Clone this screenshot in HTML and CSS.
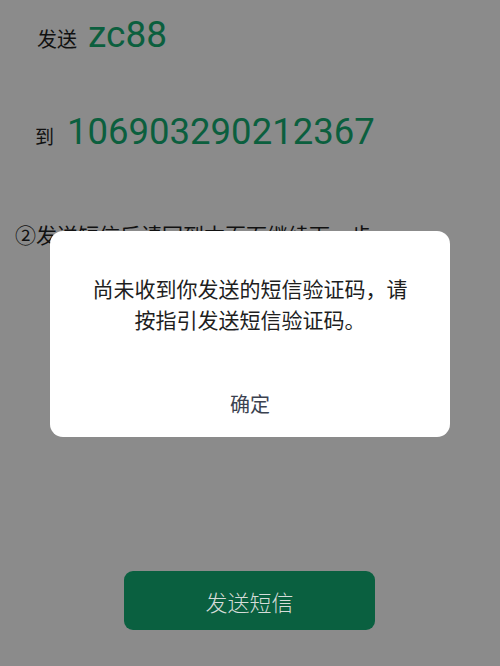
FILE: index.html
```html
<!DOCTYPE html>
<html lang="zh">
<head>
<meta charset="utf-8">
<link rel="stylesheet" href="styles.css">
</head>
<body>
<div class="page">
  <div class="row row-send">
    <span class="label">发送</span>
    <span class="code code-send">zc88</span>
  </div>
  <div class="row row-to">
    <span class="label label-to">到</span>
    <span class="code code-to">106903290212367</span>
  </div>
  <div class="step">②发送短信后请回到本页面继续下一步</div>
  <button class="send-btn">发送短信</button>
</div>
<div class="dialog">
  <p class="dialog-msg">尚未收到你发送的短信验证码，请<br>按指引发送短信验证码。</p>
  <div class="dialog-ok">确定</div>
</div>
</body>
</html>
```
FILE: styles.css
```css
html, body {
  margin: 0;
  padding: 0;
}
body {
  width: 500px;
  height: 666px;
  background: #8b8b8b;
  font-family: "Noto Sans CJK SC", "Noto Sans", sans-serif;
  position: relative;
  overflow: hidden;
}
.page {
  display: flex;
  flex-direction: column;
  padding-top: 13px;
}
.row {
  display: flex;
  align-items: baseline;
  height: 44px;
}
.row-send {
  padding-left: 37px;
  gap: 11px;
}
.row-to {
  margin-top: 53px;
  padding-left: 35px;
  gap: 13px;
}
.label {
  font-size: 20px;
  color: #111;
}
.label-to {
  font-size: 19px;
}
.code {
  font-family: Roboto, "Liberation Sans", sans-serif;
  line-height: 44px;
  color: #0b5f3e;
}
.code-send {
  font-size: 37px;
}
.code-to {
  font-size: 36.5px;
}
.step {
  margin-top: 64px;
  padding-left: 15px;
  font-size: 21px;
  line-height: 33px;
  color: #111;
  white-space: nowrap;
}
.send-btn {
  align-self: flex-start;
  margin-top: 320px;
  margin-left: 124px;
  width: 251px;
  height: 59px;
  border: none;
  border-radius: 9px;
  background: #0a6040;
  color: #d6dcd9;
  font-family: "Noto Sans CJK SC", sans-serif;
  font-size: 22px;
  font-weight: 300;
  padding: 0;
}
.dialog {
  position: absolute;
  left: 50px;
  top: 231px;
  width: 400px;
  height: 206px;
  box-sizing: border-box;
  background: #fff;
  border-radius: 13px;
  padding-top: 42px;
  text-align: center;
}
.dialog-msg {
  margin: 0;
  font-size: 21px;
  line-height: 31px;
  color: #1e1e1e;
}
.dialog-ok {
  margin-top: 53px;
  font-size: 20px;
  line-height: 31px;
  color: #3b4250;
}
```
